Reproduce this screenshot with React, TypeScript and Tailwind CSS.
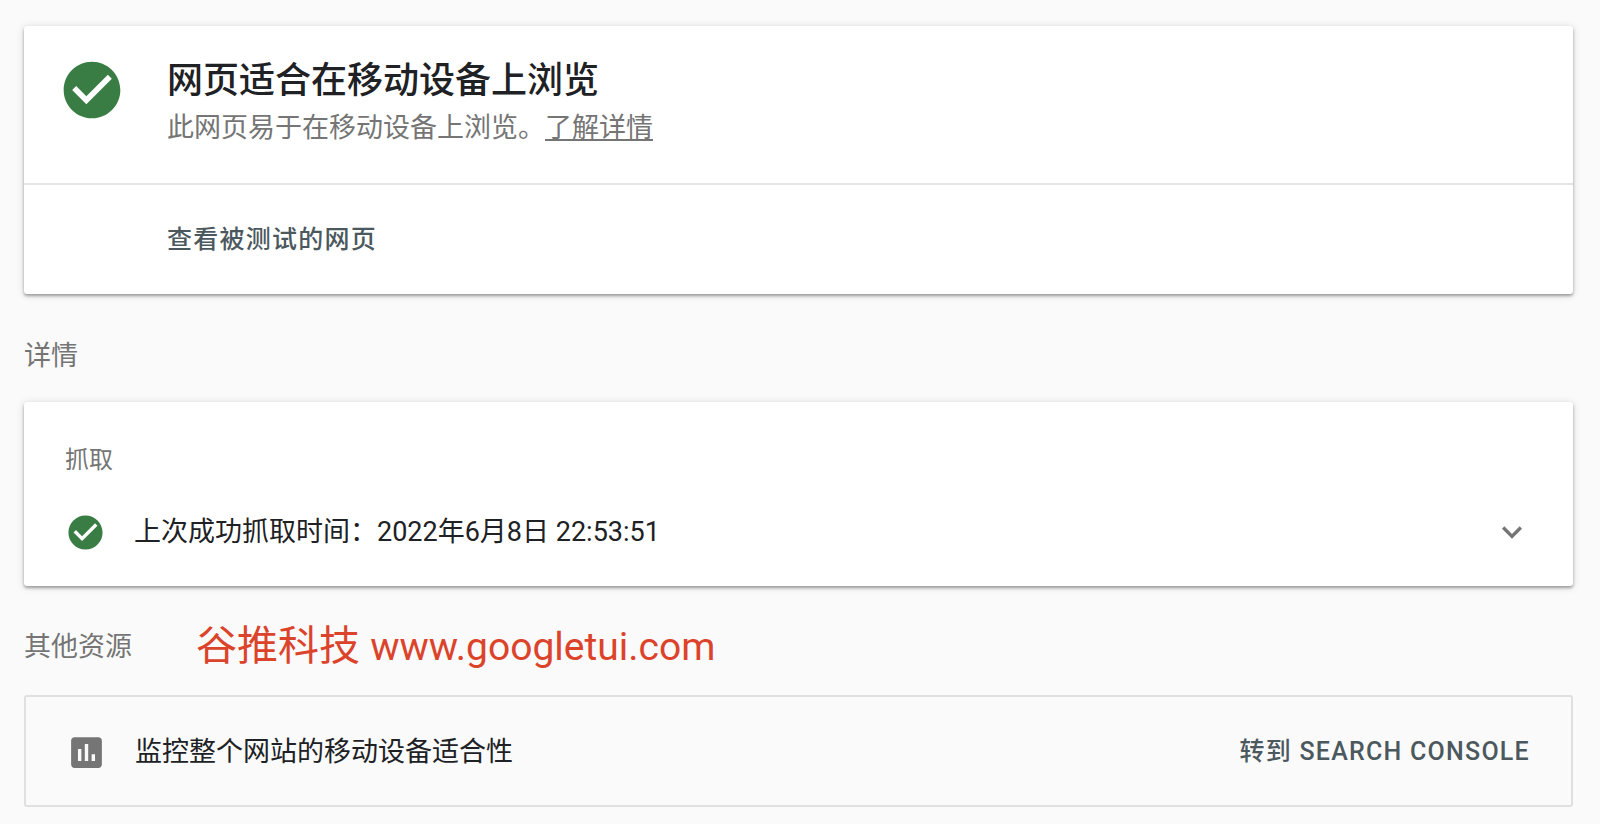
import React, { useState } from "react";
import { MdAssessment, MdCheckCircle, MdExpandMore } from "react-icons/md";

const CARD =
  "rounded-[3px] bg-white shadow-[0_2px_3px_rgba(0,0,0,0.32),0_1px_8px_rgba(0,0,0,0.14)]";

interface SectionTitleProps {
  children: React.ReactNode;
}

function SectionTitle({ children }: SectionTitleProps) {
  return <h2 className="text-[27px] leading-10 text-[#757575]">{children}</h2>;
}

function ResultCard() {
  return (
    <section className={CARD}>
      <div className="flex items-start border-b-2 border-[#e4e4e4] pt-[30px] pb-8 pl-[34px]">
        <MdCheckCircle className="size-[68px] shrink-0 text-[#3a7d44]" aria-hidden="true" />
        <div className="pl-[41px]">
          <h1 className="text-4xl leading-[50px] font-medium text-[#202124]">网页适合在移动设备上浏览</h1>
          <p className="text-[27px] leading-[45px] text-[#757575]">
            此网页易于在移动设备上浏览。
            <a href="#learn-more" className="underline">
              了解详情
            </a>
          </p>
        </div>
      </div>
      <div className="flex pt-[35px] pb-[34px] pl-[143px]">
        <button type="button" className="text-[25px] leading-10 font-medium tracking-wider text-[#4b585e]">
          查看被测试的网页
        </button>
      </div>
    </section>
  );
}

function CrawlCard() {
  const [open, setOpen] = useState(false);

  return (
    <section className={`${CARD} pt-[38px] pb-8`}>
      <h3 className="pl-[41px] text-2xl leading-10 text-[#757575]">抓取</h3>
      <button
        type="button"
        aria-expanded={open}
        onClick={() => setOpen(!open)}
        className="mt-[30px] flex w-full items-center px-[41px] text-left"
      >
        <MdCheckCircle className="size-[41px] shrink-0 text-[#3a7d44]" aria-hidden="true" />
        <span className="flex-1 pl-7 text-[27px] leading-11 text-[#202124]">
          上次成功抓取时间：2022年6月8日 22:53:51
        </span>
        <MdExpandMore className="size-10 shrink-0 text-[#757575]" aria-hidden="true" />
      </button>
    </section>
  );
}

function ResourceCard() {
  return (
    <section className="flex items-center rounded-[3px] border-2 border-[#e0e0e0] pt-[33px] pb-[31px] pr-[41px] pl-10">
      <MdAssessment className="size-[41px] shrink-0 text-[#757575]" aria-hidden="true" />
      <p className="flex-1 pl-7 text-[27px] leading-11 text-[#202124]">监控整个网站的移动设备适合性</p>
      <a href="#search-console" className="text-[25px] leading-10 font-medium tracking-wider text-[#4b585e]">
        转到 SEARCH CONSOLE
      </a>
    </section>
  );
}

export default function App() {
  return (
    <main
      lang="zh-CN"
      className="min-h-screen bg-[#fafafa] pt-[26px] pr-[27px] pb-4 pl-6 font-[Roboto,'Noto_Sans_CJK_SC',sans-serif]"
    >
      <ResultCard />
      <div className="flex items-center pt-[42px] pb-[26px]">
        <SectionTitle>详情</SectionTitle>
      </div>
      <CrawlCard />
      <div className="flex items-center gap-16 pt-8 pb-5">
        <SectionTitle>其他资源</SectionTitle>
        <p className="text-[41px] leading-14 text-[#dc432b]">
          谷推科技 <span className="text-[39px]">www.googletui.com</span>
        </p>
      </div>
      <ResourceCard />
    </main>
  );
}
